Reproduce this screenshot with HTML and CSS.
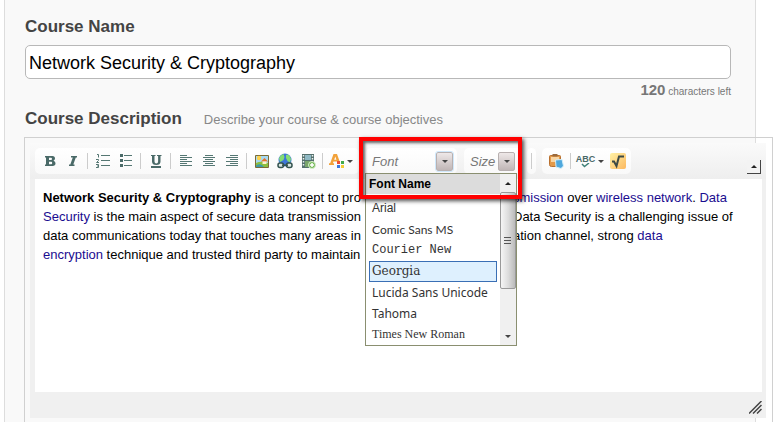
FILE: index.html
```html
<!DOCTYPE html>
<html lang="en">
<head>
<meta charset="utf-8">
<title>Course details</title>
<link rel="stylesheet" href="styles.css">
</head>
<body>
<main class="panel">
  <label class="title" for="course-name">Course Name</label>
  <input class="name-input" id="course-name" type="text" value="Network Security &amp; Cryptography">
  <p class="counter"><b>120</b> characters left</p>
  <div class="heading-row">
    <h2 class="title" id="desc-title">Course Description</h2>
    <span class="hint">Describe your course &amp; course objectives</span>
  </div>
  <section class="editor" aria-labelledby="desc-title">
    <div class="editor-inner">
      <div class="toolbar" role="toolbar" aria-label="Formatting">
        <div class="group group-main">
          <button class="tool" aria-label="Bold"><svg width="16" height="16" viewBox="0 0 16 16"><path fill="#4a6a68" fill-rule="evenodd" d="M3 3h7.500q2.500 0 2.500 2.600 0 1.500-1.500 2.200 2 .6 2 2.500 0 2.700-3 2.700H3v-1.500h1v-7H3zM7 4.800v2.200h2q1 0 1-1.100t-1-1.100zM7 8.800v2.400h2.200q1 0 1-1.200t-1-1.200z"/></svg></button>
          <button class="tool" aria-label="Italic"><svg width="16" height="16" viewBox="0 0 16 16"><path fill="#4a6a68" d="M6 3h6v1.600h-1.200L8.300 11.400H9.500V13H4v-1.600h1.300L7.800 4.600H6z"/></svg></button>
          <span class="sep"></span>
          <button class="tool" aria-label="Numbered list"><svg width="16" height="16" viewBox="0 0 16 16" fill="none" stroke="#557773"><path d="M6 2.500h9M6 7.500h9M6 12.500h9M2 1.500h1.500v3M1 6.500h2.500v1L1.500 9.500H4M1 11.500h2.500v3H1M2 13h1.500"/></svg></button>
          <button class="tool" aria-label="Bulleted list"><svg width="16" height="16" viewBox="0 0 16 16"><path d="M6 2.500h8M6 7.500h8M6 12.500h8" stroke="#557773"/><path fill="#4a6a68" d="M2 1h3v3H2zM2 6h3v3H2zM2 11h3v3H2z"/></svg></button>
          <span class="sep"></span>
          <button class="tool" aria-label="Underline"><svg width="16" height="16" viewBox="0 0 16 16"><path fill="#4a6a68" d="M3 2h4.500v1H6.500v5.500q0 2 1.800 2t1.800-2V3H9V2h4.500v1h-1v5.500q0 3.500-4.200 3.500T4 8.500V3H3zM3 13h10v2H3z"/></svg></button>
          <span class="sep"></span>
          <button class="tool" aria-label="Align left"><svg width="16" height="16" viewBox="0 0 16 16" stroke="#557773"><path d="M2 2.500h7M2 4.500h12M2 6.500h7M2 8.500h12M2 10.500h7M2 12.500h12"/></svg></button>
          <button class="tool" aria-label="Align center"><svg width="16" height="16" viewBox="0 0 16 16" stroke="#557773"><path d="M4 2.500h8M2 4.500h12M4 6.500h8M2 8.500h12M4 10.500h8M2 12.500h12"/></svg></button>
          <button class="tool" aria-label="Align right"><svg width="16" height="16" viewBox="0 0 16 16" stroke="#557773"><path d="M6 2.500h8M2 4.500h12M6 6.500h8M2 8.500h12M6 10.500h8M2 12.500h12"/></svg></button>
          <span class="sep"></span>
          <button class="tool" aria-label="Insert image"><svg width="16" height="16" viewBox="0 0 16 16"><path fill="#a7d9f2" stroke="#7b6b35" d="M1.500 2.500h13v12h-13z"/><circle cx="5" cy="5" r="2.200" fill="#ffd34a"/><path fill="#8cbf3f" d="M2 10q5-2.500 12 0v4H2z"/><path fill="#3f9ba6" d="M2 12.500q5-3 8 1.500H2z"/><path fill="#e8722c" d="M7 8.500 10.500 5 14 8.500z"/><path fill="#fff1cf" d="M8.500 8.500h4V11h-4z"/></svg></button>
          <button class="tool" aria-label="Insert link"><svg width="16" height="16" viewBox="0 0 16 16"><circle cx="8" cy="7" r="6.500" fill="#3d76d8"/><path fill="#83dc72" d="M6.500 1Q3 2 2 5.500L3 9l3.500-2L7.500 4zM9 2l2-.500q2.500 1.500 3 4.500l-1 3.500-2.500-1.500L9 5z"/><g fill="#d8e6e2" stroke="#34534f" stroke-width="1.500"><rect x="1" y="10" width="5.500" height="4.500" rx="2"/><rect x="9.500" y="10" width="5.500" height="4.500" rx="2"/><path d="M5 12.200h6"/></g></svg></button>
          <button class="tool" aria-label="Insert media"><svg width="16" height="16" viewBox="0 0 16 16"><path fill="#54706d" d="M2 1h12v14H2z"/><path fill="#8fb9c4" d="M5 2h6v5H5z"/><path fill="#7aa56b" d="M5 8h6v6H5z"/><path stroke="#eef3f2" stroke-width="1.500" stroke-dasharray="1.500 1.500" d="M3.500 2v12M12.500 2v12"/><circle cx="12" cy="12" r="3.500" fill="#74b857" stroke="#d9efcf"/><path stroke="#fff" stroke-width="1.500" d="M12 10v4M10 12h4"/></svg></button>
          <span class="sep"></span>
          <button class="tool tool-wide" aria-label="Styles"><svg width="16" height="16" viewBox="0 0 16 16"><path fill="#f2a23a" fill-rule="evenodd" d="M4.500 1H8l3 8.500H8.300L8 8.500H4.500l-.6 1.800H5V12H0v-1.700h1.200zM6.300 3.500 5.200 6.700h2.200z"/><path fill="#ee4f32" d="M8 8h3v3H8z"/><path fill="#43aa4b" d="M12 8h3v3h-3z"/><path fill="#3977dd" d="M8 12h3v3H8z"/><path fill="#f5cb35" d="M12 12h3v3h-3z"/></svg><span class="caret"></span></button>
        </div>
        <div class="group combo font-combo">
          <input class="combo-input" type="text" placeholder="Font" aria-label="Font">
          <button class="combo-arrow open" aria-label="Open font list"><span class="caret"></span></button>
          <div class="font-menu">
            <div class="menu-head">Font Name</div>
            <ul class="menu-list">
              <li><button class="opt">Arial</button></li>
              <li><button class="opt comic">Comic Sans MS</button></li>
              <li><button class="opt courier">Courier New</button></li>
              <li><button class="opt georgia selected">Georgia</button></li>
              <li><button class="opt lucida">Lucida Sans Unicode</button></li>
              <li><button class="opt lucida">Tahoma</button></li>
              <li><button class="opt times">Times New Roman</button></li>
            </ul>
            <div class="scrollbar">
              <button class="scroll-btn" aria-label="Scroll up"><span class="caret up"></span></button>
              <div class="scroll-track"><div class="scroll-thumb"><svg width="8" height="9" viewBox="0 0 8 9"><path d="M0 1.500h7M0 4.500h7M0 7.500h7" stroke="#555"/></svg></div></div>
              <button class="scroll-btn" aria-label="Scroll down"><span class="caret"></span></button>
            </div>
          </div>
          <div class="callout"></div>
        </div>
        <div class="group combo size-combo">
          <input class="combo-input" type="text" placeholder="Size" aria-label="Size">
          <button class="combo-arrow" aria-label="Open size list"><span class="caret"></span></button>
        </div>
        <div class="group group-sep"><span class="sep"></span></div>
        <div class="group group-end">
          <button class="tool" aria-label="Paste"><svg width="16" height="16" viewBox="0 0 16 16"><path fill="#e39a4a" stroke="#b9702f" d="M1.500 3.500Q1.500 2.500 2.500 2.500h9q1 0 1 1V13.500h-9q-2 0-2-2z"/><path fill="#f9d6a3" d="M3 4h8v5H3z"/><path fill="#9a6a3c" d="M4.500 1h5v2.500h-5z"/><path fill="#4fa8dd" stroke="#d4effa" d="M7.500 7 14 6.500l1.500 6.500-2.500 2.500-5-1.500z"/></svg></button>
          <span class="sep"></span>
          <button class="tool tool-wide spell" aria-label="Spell check"><span class="abc">ABC<svg width="9" height="5" viewBox="0 0 9 5" fill="none" stroke="#3f8178" stroke-width="1.500"><path d="M1 1l2.500 2.500L8 0"/></svg></span><span class="caret"></span></button>
          <button class="tool" aria-label="Equation"><svg width="16" height="16" viewBox="0 0 16 16"><defs><linearGradient id="eq" x1="0" y1="0" x2="1" y2="1"><stop offset="0" stop-color="#fff2a6"/><stop offset="1" stop-color="#fcb860"/></linearGradient></defs><rect width="16" height="16" rx="2" fill="url(#eq)"/><path d="M2 8.500h2L6.500 13 9 3.500h5" fill="none" stroke="#3d4a45" stroke-width="2"/></svg></button>
        </div>
        <button class="collapse" aria-label="Collapse toolbar"><span class="caret up"></span></button>
      </div>
      <div class="content" contenteditable="true" role="textbox" aria-label="Course description">
        <div class="line"><span><b>Network Security &amp; Cryptography</b> is a concept to pro</span><span><span class="link">smission</span> over <span class="link">wireless network</span>. <span class="link">Data</span></span></div>
        <div class="line"><span><span class="link">Security</span> is the main aspect of secure data transmission</span><span>Data Security is a challenging issue of</span></div>
        <div class="line"><span>data communications today that touches many areas in</span><span>ation channel, strong <span class="link">data</span></span></div>
        <div class="line"><span><span class="link">encryption</span> technique and trusted third party to maintain</span></div>
      </div>
      <div class="status">
        <svg width="13" height="13" viewBox="0 0 13 13" stroke="#444" stroke-width="1.500"><path d="M0 12.500 12.500 0M4 12.500 12.500 4M8 12.500 12.500 8"/></svg>
      </div>
    </div>
  </section>
</main>
</body>
</html>
```
FILE: styles.css
```css
* { box-sizing: border-box; }
body {
  margin: 0;
  background: #fff;
  font-family: "Liberation Sans", Arial, sans-serif;
  color: #000;
}
button { border: 0; padding: 0; background: none; font: inherit; color: inherit; }
.panel {
  min-height: 100vh;
  margin: 0 21px 0 4px;
  padding: 17px 24px 0 20px;
  border: solid #ddd;
  border-width: 0 1px;
  background: #f9f9f9;
}
.title {
  display: block;
  margin: 0;
  font-size: 17px;
  line-height: 20px;
  font-weight: bold;
  color: #444;
}
.name-input {
  display: block;
  width: 100%;
  height: 34px;
  margin-top: 8px;
  padding: 2px 3px 0;
  border: 1px solid #b8b8b8;
  border-radius: 5px;
  background: #fff;
  font: 18px "Liberation Sans", Arial, sans-serif;
  color: #000;
}
.counter {
  margin: 1px 0 7px;
  text-align: right;
  font-size: 10px;
  line-height: 20px;
  color: #777;
}
.counter b { font-size: 15px; }
.heading-row { display: flex; align-items: baseline; gap: 22px; height: 20px; }
.hint { font-size: 13px; line-height: 20px; color: #888; }
.editor {
  margin: 8px -42px 0 -1px;
  padding: 5px 6px 4px 5px;
  border: solid #d0d0d0;
  border-width: 1px 1px 0;
}
.editor-inner { background: #f0f0f0; }
.toolbar {
  display: flex;
  height: 36px;
  padding: 5px 5px;
  background: linear-gradient(#fafafa, #eee);
}
.group {
  display: flex;
  align-items: center;
  height: 26px;
  border-radius: 5px;
  background: linear-gradient(#fff, #f9f9f9);
}
.group-main { padding: 0 3px; }
.group-end { padding: 0 2px; }
.tool {
  display: flex;
  align-items: center;
  justify-content: center;
  width: 23px;
  height: 24px;
}
.tool-wide { width: 30px; gap: 2px; }
.sep { width: 1px; height: 16px; margin: 0 3px; background: #ccc; }
.caret {
  border: 3px solid transparent;
  border-top-color: #444;
  border-bottom: 0;
}
.caret.up { border-top: 0; border-bottom: 3px solid #222; }
.combo { position: relative; padding: 0 4px 0 6px; }
.font-combo { width: 91px; margin-left: 7px; }
.size-combo { width: 57px; margin: 0 6px 0 7px; padding-right: 6px; }
.combo-input {
  flex: 1;
  min-width: 0;
  border: 0;
  padding: 0;
  background: none;
  font: italic 13px "Liberation Sans", Arial, sans-serif;
}
.combo-input::placeholder { color: #777; opacity: 1; }
.combo-arrow {
  display: flex;
  align-items: center;
  justify-content: center;
  flex: none;
  width: 17px;
  height: 19px;
  border: 1px solid #b8b0b0;
  border-radius: 2px;
  background: linear-gradient(#eee8e8, #c0b6b6);
}
.combo-arrow.open { outline: 1px solid #cfe8fb; }
.group-sep { padding: 0 1px; margin-right: 6px; }
.font-menu {
  position: absolute;
  z-index: 1;
  top: 25px;
  left: -1px;
  width: 152px;
  height: 173px;
  display: grid;
  grid-template: 20px minmax(0, 1fr) / 1fr 16px;
  border: 1px solid #8a8f70;
  background: #fff;
  overflow: hidden;
}
.menu-head {
  padding-left: 3px;
  background: #dcdcdc;
  font-size: 12px;
  line-height: 20px;
  font-weight: bold;
}
.menu-list { grid-row: 2; margin: 0; padding: 4px 3px 0; list-style: none; }
.opt {
  display: block;
  width: 100%;
  height: 21px;
  padding: 0 2px;
  border: 1px solid transparent;
  text-align: left;
  white-space: nowrap;
  font-size: 12px;
  line-height: 19px;
  color: #333;
}
.comic { font-family: "Comic Sans MS", Lato, sans-serif; }
.courier { font-family: "Liberation Mono", monospace; }
.georgia { font-family: Georgia, "DejaVu Serif", serif; }
.lucida { font-family: "Noto Sans", sans-serif; }
.times { font-family: "Liberation Serif", serif; }
.selected { border-color: #3a6fb5; background: #def0fe; }
.scrollbar {
  grid-area: 1 / 2 / 3 / 3;
  display: flex;
  flex-direction: column;
  background: #f0f0f0;
}
.scroll-btn { display: flex; align-items: center; justify-content: center; height: 18px; }
.scroll-track { flex: 1; }
.scroll-thumb {
  display: flex;
  align-items: center;
  justify-content: center;
  height: 72%;
  border: 1px solid #999;
  border-radius: 2px;
  background: linear-gradient(90deg, #f5f5f5, #ddd 50%, #bbb);
}
.callout {
  position: absolute;
  z-index: 2;
  top: -11px;
  left: -7px;
  width: 163px;
  height: 62px;
  border: 4px solid #f00;
  box-shadow: 2px 2px 4px rgba(0, 0, 0, .7), inset 2px 2px 3px rgba(0, 0, 0, .6);
  pointer-events: none;
}
.spell { width: 32px; gap: 3px; }
.abc {
  display: flex;
  flex-direction: column;
  align-items: center;
  font-size: 9px;
  line-height: 8px;
  font-weight: bold;
  color: #4a6a68;
}
.collapse {
  display: flex;
  align-items: center;
  justify-content: center;
  width: 14px;
  height: 14px;
  margin: 12px 0 0 auto;
  border: solid #444;
  border-width: 0 1px 1px 0;
  background: #f3f3f3;
}
.content {
  min-height: 213px;
  margin: 0 4px 0 5px;
  padding: 9px 8px;
  background: #fff;
  font-size: 13px;
  line-height: 19px;
  white-space: nowrap;
}
.line { display: grid; grid-template-columns: 470px 1fr; }
.link { color: #1a0c90; }
.status {
  display: flex;
  justify-content: flex-end;
  align-items: center;
  height: 26px;
  padding: 5px 4px 0 0;
}
```
